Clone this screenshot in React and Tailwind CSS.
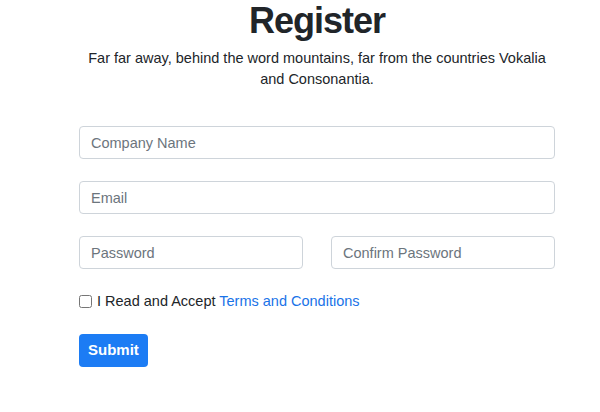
const inputClass =
  "h-[33px] w-full rounded-[4px] border border-[#ced4da] bg-white px-[11px] text-[14.5px] text-[#495057] placeholder:text-[#6c757d] focus:outline-none";

export default function App() {
  return (
    <main className="min-h-screen bg-white font-['Liberation_Sans',Arial,sans-serif] text-[#212529]">
      <div className="ml-[79px] w-[476px]">
        {/* Heading */}
        <div className="flex flex-col items-center pt-[1px] text-center">
          <h1 className="text-[36px] font-bold leading-[40px] tracking-[-1px] text-[#212529]">Register</h1>
          <p className="mt-[7px] w-[476px] text-[14.5px] leading-[21px]">
            Far far away, behind the word mountains, far from the countries Vokalia and Consonantia.
          </p>
        </div>

        {/* Form */}
        <form className="mt-[36px] flex flex-col gap-[22px]">
          <input type="text" placeholder="Company Name" className={inputClass} />
          <input type="email" placeholder="Email" className={inputClass} />
          <div className="grid grid-cols-2 gap-[28px]">
            <input type="password" placeholder="Password" className={inputClass} />
            <input type="password" placeholder="Confirm Password" className={inputClass} />
          </div>

          <label className="flex items-center gap-[5px] text-[14.5px] leading-[21px]">
            <input type="checkbox" className="h-[13px] w-[13px]" />
            <span>
              I Read and Accept <a href="#" className="text-[#1a73e8]">Terms and Conditions</a>
            </span>
          </label>

          <div>
            <button
              type="button"
              className="h-[33px] rounded-[4px] bg-[#1c7cf4] px-[9px] text-[15px] font-bold text-white"
            >
              Submit
            </button>
          </div>
        </form>
      </div>
    </main>
  );
}
